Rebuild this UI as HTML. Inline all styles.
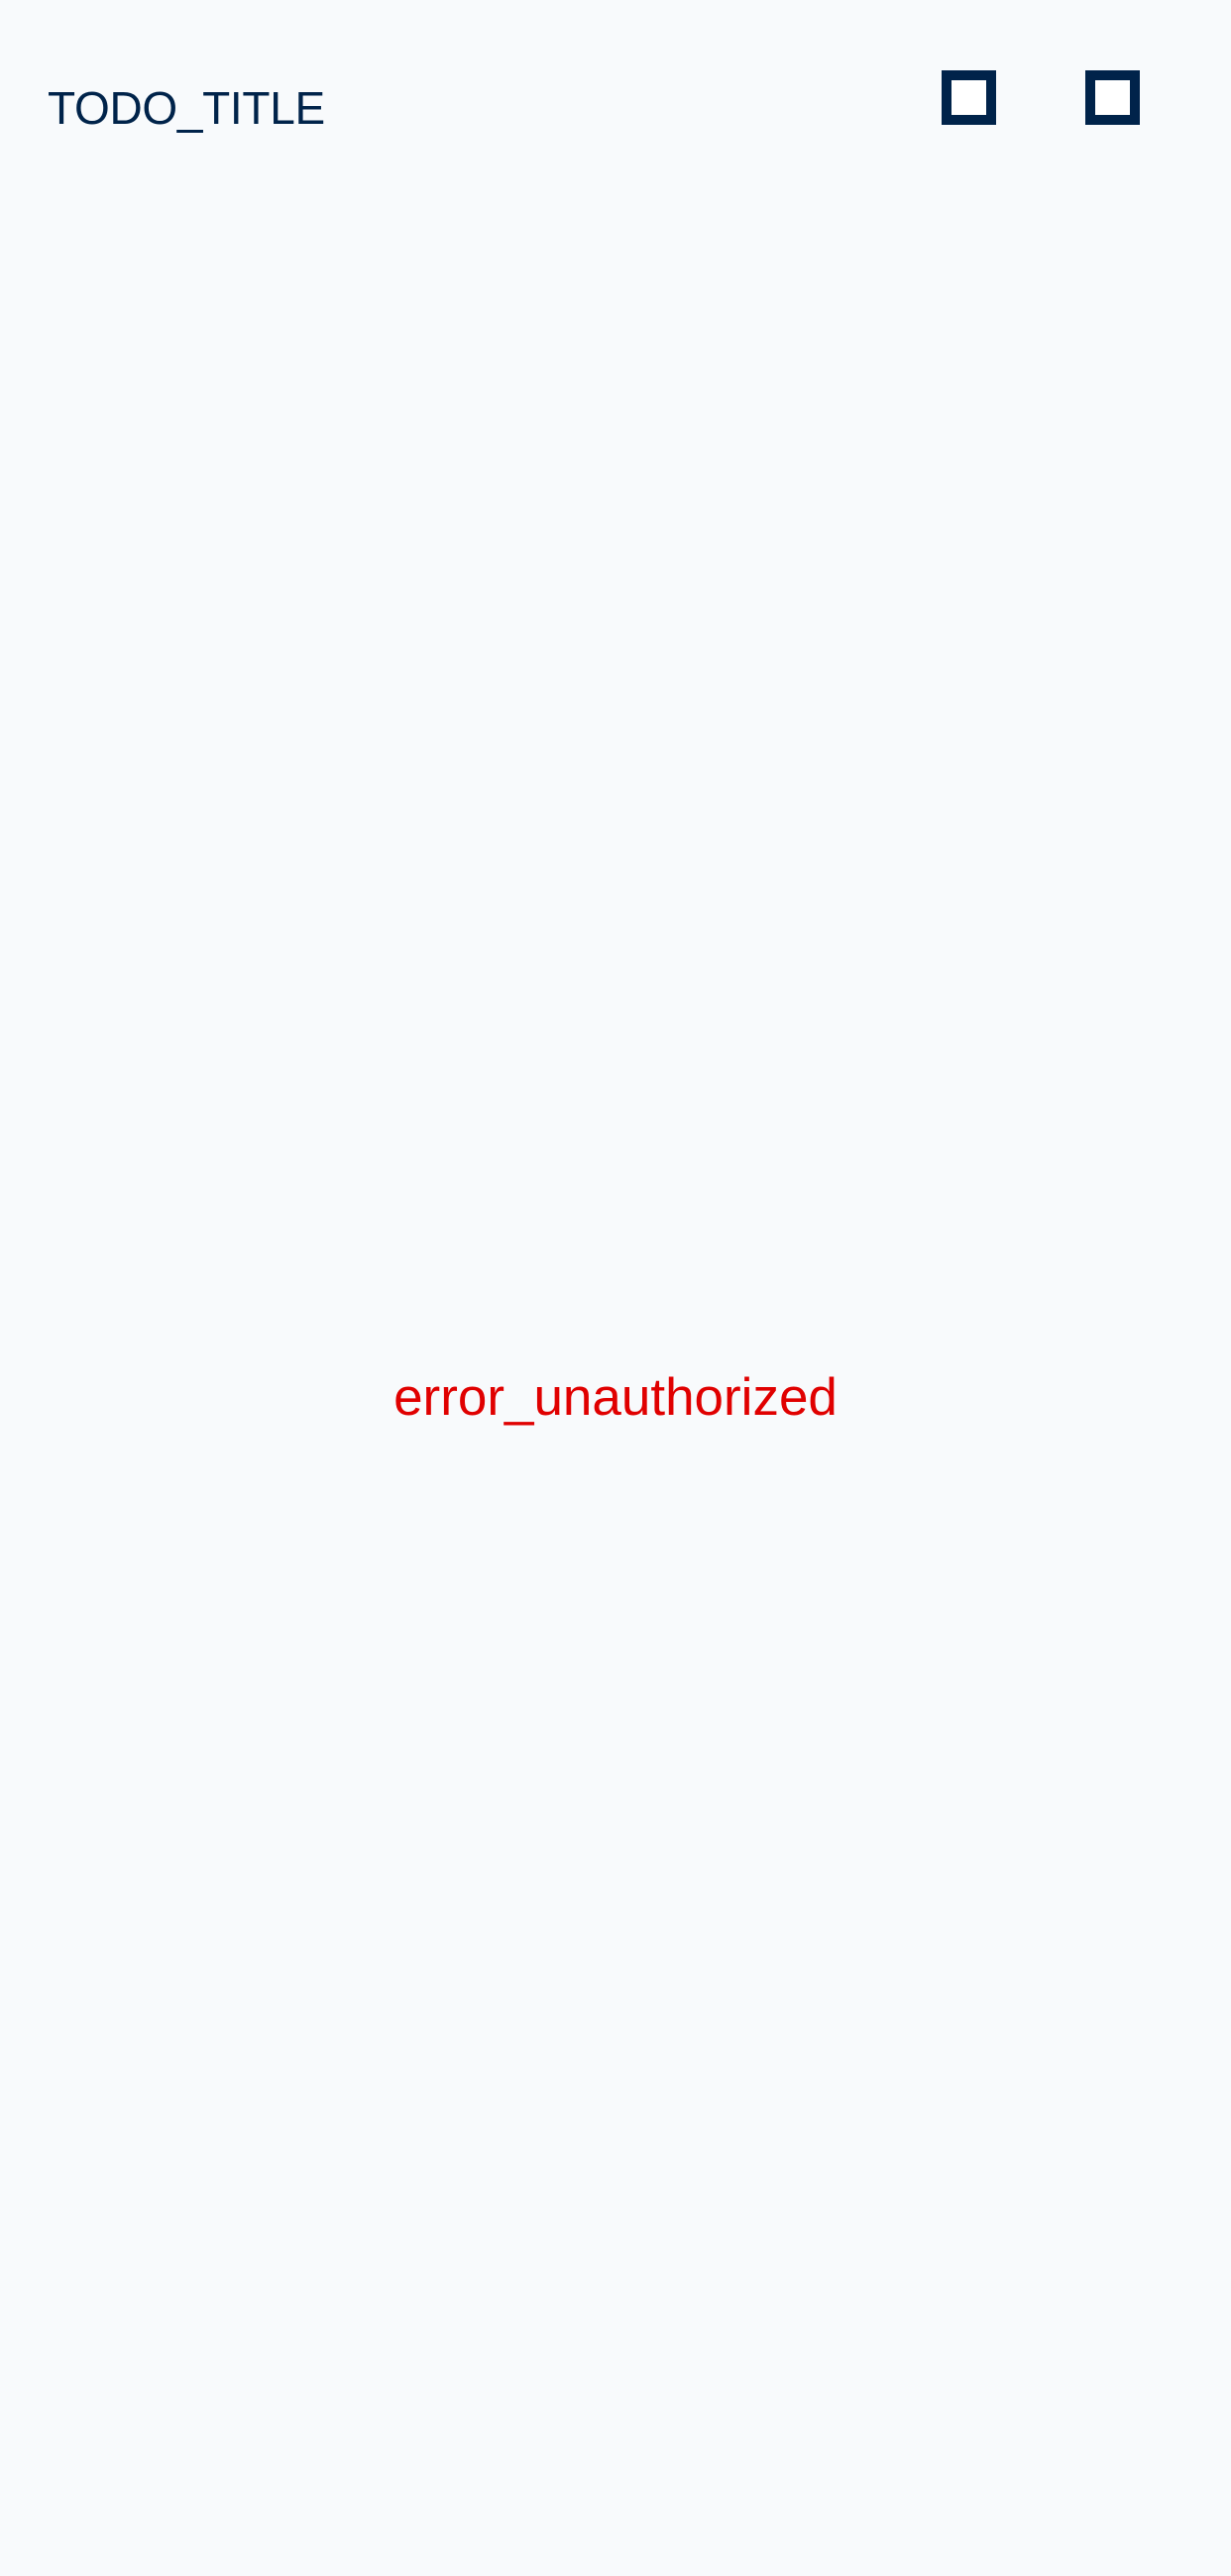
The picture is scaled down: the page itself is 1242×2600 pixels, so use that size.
<!DOCTYPE html>
<html><head><meta charset="utf-8"><style>
html,body{margin:0;padding:0;}
body{width:1242px;height:2600px;background:#f8fafc;position:relative;overflow:hidden;font-family:"Liberation Sans",sans-serif;}
.t{position:absolute;left:48px;top:76px;font-size:46px;line-height:66px;color:#00234a;white-space:nowrap;letter-spacing:-0.3px;}
.b{position:absolute;top:71px;width:35px;height:35px;border:10px solid #00234a;background:#fff;}
.e{position:absolute;left:0;width:1242px;text-align:center;top:1378px;font-size:53px;line-height:66px;color:#e00000;}
</style></head><body>
<div class="t">TODO_TITLE</div>
<div class="b" style="left:950px"></div>
<div class="b" style="left:1095px"></div>
<div class="e">error_unauthorized</div>
</body></html>
